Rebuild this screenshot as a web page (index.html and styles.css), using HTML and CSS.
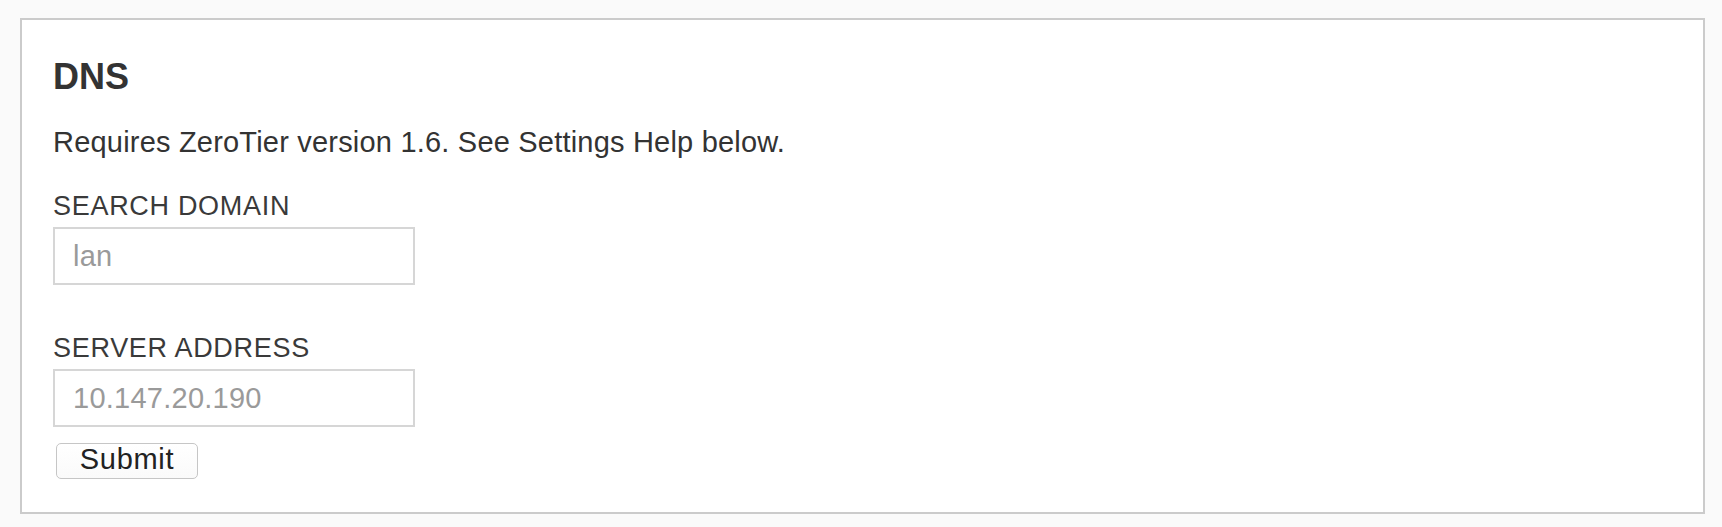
FILE: index.html
```html
<!DOCTYPE html>
<html lang="en">
<head>
<meta charset="utf-8">
<title>DNS</title>
<link rel="stylesheet" href="styles.css">
</head>
<body>
<section class="card">
  <h2 class="card-title">DNS</h2>
  <p class="card-note">Requires ZeroTier version 1.6. See Settings Help below.</p>
  <form class="dns-form">
    <label class="field-label" for="domain">SEARCH DOMAIN</label>
    <input class="field-input field-input--first" id="domain" type="text" placeholder="lan">
    <label class="field-label" for="server">SERVER ADDRESS</label>
    <input class="field-input" id="server" type="text" placeholder="10.147.20.190">
    <div class="actions">
      <button class="submit-btn" type="button">Submit</button>
    </div>
  </form>
</section>
</body>
</html>
```

FILE: styles.css
```css
html, body {
  margin: 0;
  padding: 0;
  background: #fafafa;
}

body {
  padding: 18px 17px 13px 20px;
  font-family: "Liberation Sans", Arial, Helvetica, sans-serif;
  color: #333;
}

.card {
  box-sizing: border-box;
  width: 1685px;
  background: #fff;
  border: 2px solid #cbcbcb;
  padding: 37px 31px 33px 31px;
}

.card-title {
  margin: 0 0 28px 0;
  font-size: 36px;
  line-height: 40px;
  font-weight: 700;
  color: #333;
}

.card-note {
  margin: 0 0 32px 0;
  font-size: 29px;
  line-height: 34px;
  letter-spacing: 0.2px;
  color: #333;
}

.dns-form {
  display: flex;
  flex-direction: column;
  align-items: flex-start;
}

.field-label {
  display: block;
  font-size: 27px;
  line-height: 30px;
  letter-spacing: 0.7px;
  color: #3a3a3a;
  margin: 0 0 6px 0;
}

.field-input {
  box-sizing: border-box;
  width: 362px;
  height: 58px;
  margin: 0;
  border: 2px solid #d6d6d6;
  border-radius: 0;
  padding: 0 14px 0 18px;
  font-family: "Liberation Sans", Arial, Helvetica, sans-serif;
  font-size: 29px;
  letter-spacing: 0.25px;
  color: #333;
  background: #fff;
  outline: none;
}

.field-input::placeholder {
  color: #9a9a9a;
  opacity: 1;
}

.field-input--first {
  margin-bottom: 48px;
}

.actions {
  display: flex;
  margin-top: 16px;
  padding-left: 3px;
}

.submit-btn {
  box-sizing: border-box;
  width: 142px;
  height: 36px;
  margin: 0;
  padding: 0 0 5px 0;
  border: 1px solid #c6c6c6;
  border-radius: 5px;
  background: linear-gradient(#ffffff, #fafafa);
  font-family: "Liberation Sans", Arial, Helvetica, sans-serif;
  font-size: 29px;
  line-height: 30px;
  letter-spacing: 0.7px;
  color: #222;
  text-align: center;
}
```
